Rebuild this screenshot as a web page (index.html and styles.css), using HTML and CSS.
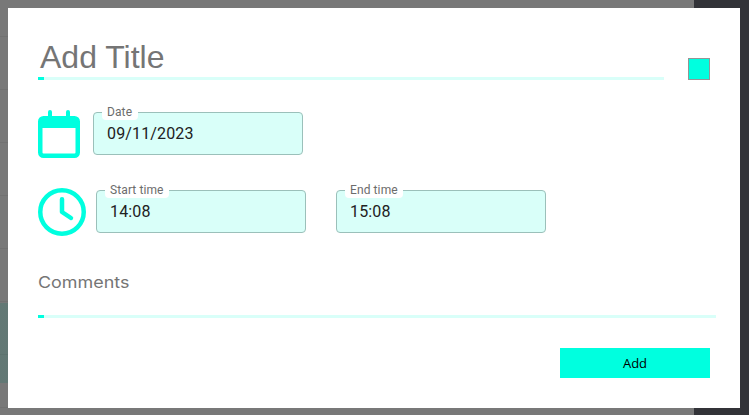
FILE: index.html
```html
<!DOCTYPE html>
<html lang="en">
<head>
<meta charset="utf-8">
<title>Add event</title>
<link rel="stylesheet" href="styles.css">
</head>
<body>
<main class="modal">
  <header class="heading">
    <div class="title underlined"><span>Add Title</span></div>
    <div class="swatch"></div>
  </header>
  <div class="row date-row">
    <svg class="calendar" viewBox="0 0 42 48" fill="#00ffdf"><path fill-rule="evenodd" d="M10 2a2 2 0 0 1 4 0v4h14V2a2 2 0 0 1 4 0v4h4.500A5.500 5.500 0 0 1 42 11.500V42.500A5.500 5.500 0 0 1 36.500 48h-31A5.500 5.500 0 0 1 0 42.500v-31A5.500 5.500 0 0 1 5.500 6H10zM4.500 18v24.500a1 1 0 0 0 1 1h31a1 1 0 0 0 1-1V18z"/></svg>
    <div class="field"><span class="label">Date</span><span class="value">09/11/2023</span></div>
  </div>
  <div class="row time-row">
    <svg class="clock" viewBox="0 0 48 48" fill="none" stroke="#00ffdf"><circle cx="24" cy="24" r="21.750" stroke-width="4.500"/><path d="M24 11.250V24l9 6" stroke-width="4.500" stroke-linecap="round" stroke-linejoin="round"/></svg>
    <div class="field"><span class="label">Start time</span><span class="value">14:08</span></div>
    <div class="field end"><span class="label">End time</span><span class="value">15:08</span></div>
  </div>
  <div class="comments underlined"><span class="placeholder">Comments</span></div>
  <div class="add">Add</div>
</main>
</body>
</html>
```
FILE: styles.css
```css
* { box-sizing: border-box; }
body {
  margin: 0;
  padding: 8px;
  height: 415px;
  overflow: hidden;
  background:
    linear-gradient(#323338, #323338) 694px 0 / 55px 415px no-repeat,
    linear-gradient(rgba(0, 120, 100, .18), rgba(0, 120, 100, .18)) 0 303px / 8px 80px no-repeat,
    repeating-linear-gradient(#717171 0 1px, #787878 1px 53px) 0 36px / 8px 379px no-repeat,
    #787878;
  font-family: Roboto, sans-serif;
}
.modal {
  display: flex;
  flex-direction: column;
  width: 732px;
  height: 400px;
  padding: 30px 24px 30px 30px;
  background: #fff;
}
.heading { display: flex; height: 42px; }
.underlined {
  background:
    linear-gradient(#00ffdf, #00ffdf) left bottom / 6px 3px no-repeat,
    linear-gradient(#d9fff9, #d9fff9) left bottom / 100% 3px no-repeat;
  color: #757575;
}
.title {
  width: 626px;
  padding-left: 2px;
  font: 32px/38px "Liberation Sans", Arial, sans-serif;
}
.swatch {
  width: 22px;
  height: 22px;
  margin: 20px 0 0 24px;
  border: 1px solid #959595;
  background: #00ffdf;
}
.row { display: flex; height: 48px; }
.date-row { margin-top: 30px; }
.time-row { margin-top: 30px; }
.calendar { width: 42px; height: 48px; margin-right: 13px; }
.clock { width: 48px; height: 48px; margin-right: 10px; }
.field {
  position: relative;
  width: 210px;
  height: 43px;
  margin-top: 2px;
  padding: 11px 13px;
  border: 1px solid #9bc0ba;
  border-radius: 4px;
  background: #d9fff9;
}
.end { margin-left: 30px; }
.label {
  position: absolute;
  top: -9px;
  left: 8px;
  padding: 0 5.5px 0 5px;
  border-radius: 4px;
  background: #fff;
  color: #6c6c6c;
  font-size: 12px;
  line-height: 16px;
  letter-spacing: .1px;
  white-space: nowrap;
}
.value {
  display: block;
  color: #212121;
  font-size: 16px;
  line-height: 20px;
  letter-spacing: .15px;
}
.comments {
  width: 678px;
  height: 53px;
  margin-top: 29px;
  font: 400 16px/34px Inter, sans-serif;
}
.placeholder {
  display: inline-block;
  transform: scaleX(1.12);
  transform-origin: left;
}
.add {
  width: 150px;
  height: 30px;
  margin: 30px 6px 0 auto;
  background: #00ffdf;
  color: #000;
  font: 13px/30px "Open Sans", sans-serif;
  letter-spacing: -.1px;
  text-align: center;
}
```
